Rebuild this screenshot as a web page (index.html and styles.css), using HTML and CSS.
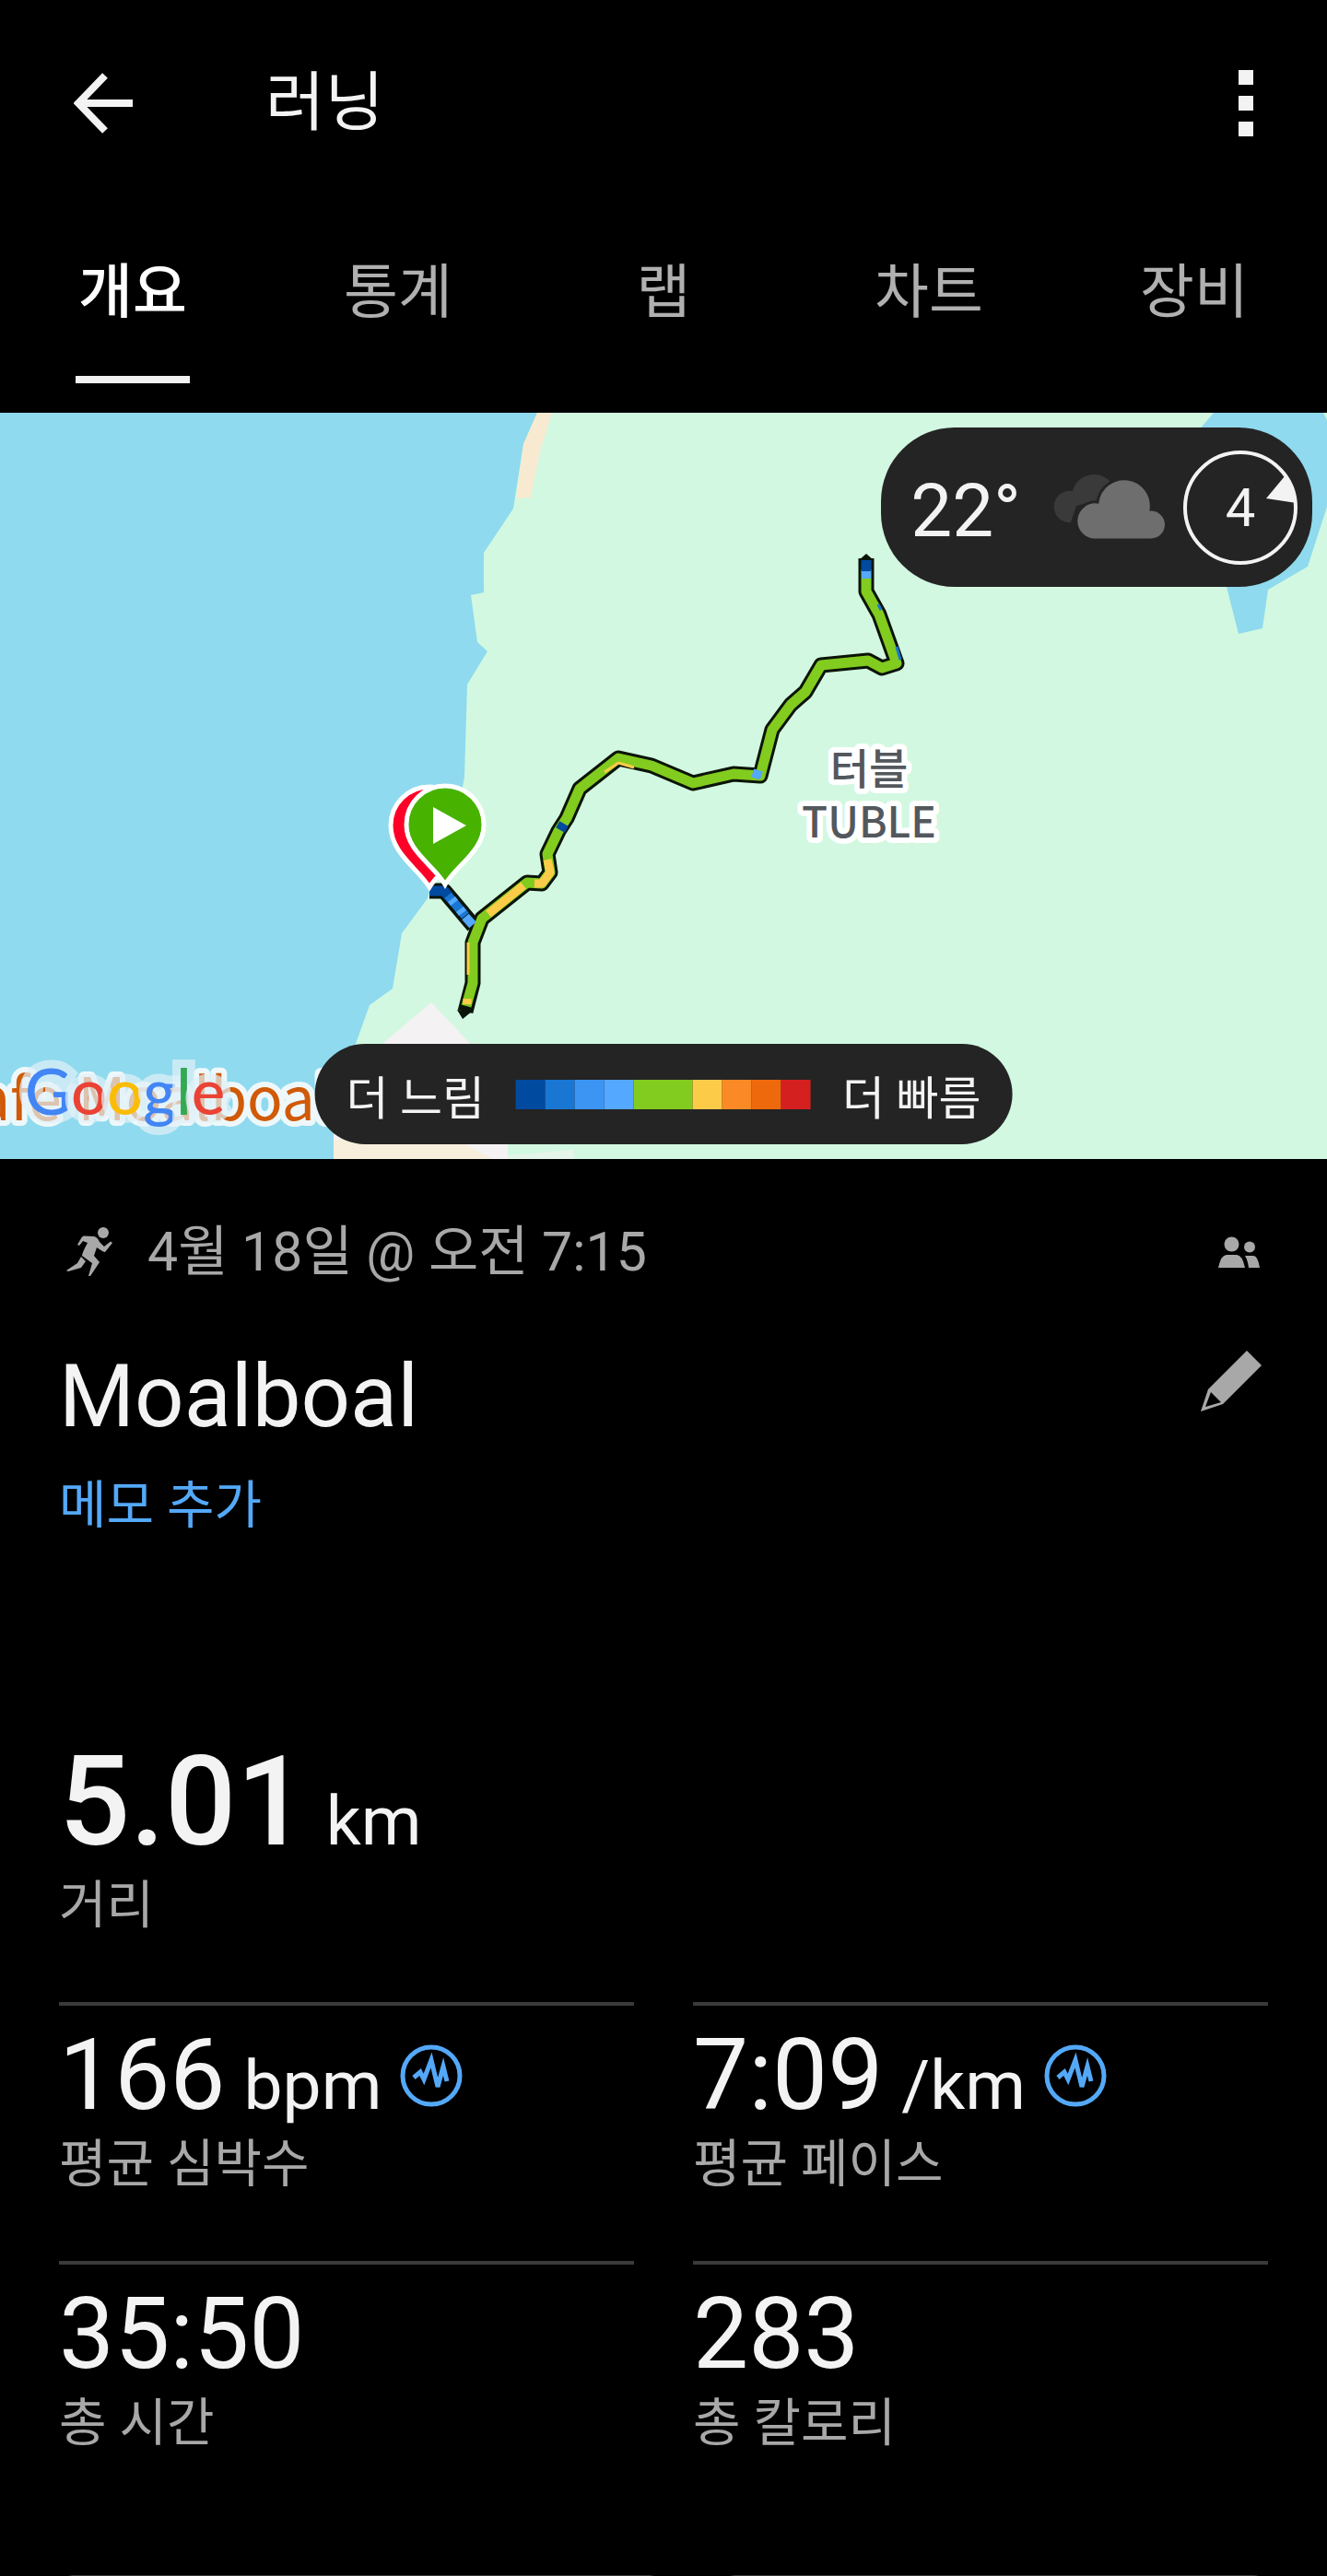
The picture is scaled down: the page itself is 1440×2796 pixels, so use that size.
FILE: index.html
```
<!DOCTYPE html>
<html lang="ko">
<head>
  <meta charset="UTF-8" />
  <meta name="viewport" content="width=device-width, initial-scale=1" />
  <title>러닝 - Moalboal</title>
  <link rel="stylesheet" href="styles.css">
</head>
<body>
  <header class="app-bar">
    <button class="icon-btn" aria-label="뒤로">
      <svg width="64" height="66" viewBox="0 0 64 66"><path d="M64 33H5M34 3L5 33l29 30" fill="none" stroke="currentColor" stroke-width="8"/></svg>
    </button>
    <h1>러닝</h1>
    <button class="icon-btn" aria-label="더보기">
      <svg width="16" height="72" viewBox="0 0 16 72" fill="currentColor"><path d="M0 0h16v16H0zM0 28h16v16H0zM0 56h16v16H0z"/></svg>
    </button>
  </header>

  <nav class="tabs">
    <button class="tab active">개요</button>
    <button class="tab">통계</button>
    <button class="tab">랩</button>
    <button class="tab">차트</button>
    <button class="tab">장비</button>
  </nav>

  <section class="map">
    <svg class="map-canvas" viewBox="0 0 1440 810" role="img" aria-label="지도">
      <rect width="1440" height="810" fill="#d2f8e1"/>
      <!-- sea -->
      <path fill="#8fdaee" d="M0 0H583L568 34 557 104 525 152V195L511 198 518 249 529 259 507 295 504 395 501 412 464 527 436 565 426 625 401 643 386 685 362 785V810H0z"/>
      <path fill="#f8ead0" d="M583 0H599L587 38 580 70 576 92 560 93 568 34z"/>
      <path fill="#8fdaee" d="M1317 0H1436L1440 8V102L1419 167 1376 192 1370 234 1344 240 1331 189 1300 20z"/>
      <!-- town -->
      <path fill="#f5f2f3" d="M468 640L520 695 551 794V810H362V730z"/>
      <path fill="#f7eedb" d="M362 790L420 784 498 790 534 810H362z"/>
      <path fill="#e5f5ea" d="M551 806L622 800V810H551z"/>

      <text class="place place-food" x="360" y="768" text-anchor="end">afe Moalboal</text>
      <text class="google" x="27" y="762"><tspan fill="#4285f4">G</tspan><tspan fill="#ea4335">o</tspan><tspan fill="#fbbc05">o</tspan><tspan fill="#4285f4">g</tspan><tspan fill="#34a853">l</tspan><tspan fill="#ea4335">e</tspan></text>
      <text class="place" x="943" y="403" text-anchor="middle">터블</text>
      <text class="place" x="943" y="461" text-anchor="middle">TUBLE</text>

      <!-- route -->
      <g fill="none" stroke-linejoin="round">
        <path class="route-edge" d="M466 519L482 519 514 557"/>
        <path class="route-edge" d="M940 158V194L954 219 973 272 957 277 942 269 891 274 874 303 858 317 838 344 825 394 796 392 752 402 707 383 671 375 629 408 615 440 606 454 594 479 597 499 588 511 572 510 523 549 513 575V619L505 650"/>
        <path fill="#0b1408" d="M932 160L940 153 948 160zM496 648L502 658 512 650z"/>
        <path stroke="#82cb1f" stroke-width="11" d="M940 170V194L954 219 973 272 957 277 942 269 891 274 874 303 858 317 838 344 825 394 796 392 752 402 707 383 671 375 629 408 615 440 606 454 594 479 597 499 588 511 572 510 523 549 513 575V619L506 644"/>
        <path stroke="#fccc49" stroke-width="9" d="M594 485L597 499 588 511H580M568 513L530 544"/>
        <path stroke="#fccc49" stroke-width="3" d="M508 575V610M671 380L656 390M671 380L688 385"/>
        <path stroke="#fccc49" stroke-width="9" d="M507 636V642"/>
        <path stroke="#004a9f" stroke-width="11" d="M466 519L482 519 487 525M612 446L608 453M940 160V172"/>
        <path stroke="#1976d2" stroke-width="10" d="M486 524L505 546"/>
        <path stroke="#54a8ff" stroke-width="10" d="M490 528L493 532M499 539L502 543M505 547L513 556M940 172V180M823 388L820 397"/>
        <path stroke="#1976d2" stroke-width="3" d="M953 208L956 214M973 254L977 268"/>
      </g>

      <!-- finish and start pins -->
      <path fill="#fc0028" stroke="#fff" stroke-width="5" d="M466 515C454 495 424 478 424 448a42 42 0 0 1 84 0C508 478 478 495 466 515z"/>
      <path fill="#47b200" stroke="#fff" stroke-width="5" d="M483 512C470 490 441 476 441 447a42 42 0 0 1 84 0C525 476 496 490 483 512z"/>
      <path fill="#fff" d="M470 428V468L506 448z"/>
    </svg>

    <div class="weather">
      <span>22°</span>
      <svg width="126" height="72" viewBox="0 0 126 72">
        <path fill="#3a3a3a" d="M18 52A17 17 0 0 1 24 18A24 24 0 0 1 68 12L52 28 28 34 22 52z"/>
        <path fill="#6e6e6e" stroke="#242424" stroke-width="3" d="M46 71A20.500 20.500 0 0 1 51 30A29 29 0 0 1 109 38A16.500 16.500 0 0 1 109 71z"/>
      </svg>
      <div class="wind">
        <svg width="124" height="124" viewBox="0 0 124 124">
          <circle cx="62" cy="62" r="60" fill="none" stroke="#f3f3f3" stroke-width="4"/>
          <path fill="#f3f3f3" d="M110 28L90 52 123 57Q120 40 110 28z"/>
        </svg>
        <span>4</span>
      </div>
    </div>

    <div class="legend">
      <span>더 느림</span>
      <div class="scale">
        <i class="s1"></i><i class="s2"></i><i class="s3"></i><i class="s4"></i><i class="s5"></i><i class="s6"></i><i class="s7"></i><i class="s8"></i><i class="s9"></i>
      </div>
      <span>더 빠름</span>
    </div>
  </section>

  <main class="overview">
    <div class="meta">
      <svg width="52" height="54" viewBox="0 0 52 54" fill="#a8a8a8">
        <circle cx="40" cy="6" r="6"/>
        <path d="M19 9.500L30 10Q34 11 36 16L41 21 48 15.500 50 17 42 27Q40 27 33 22L30 31 36 38 26 53H24L28 39 17 31Q17 28 23 17L18 15 14 20 12 19 17 10.500z"/>
        <path d="M16 32L21 37 16 44 2 48 0 47 12 39z"/>
      </svg>
      <time>4월 18일 @ 오전 7:15</time>
      <svg width="46" height="34" viewBox="0 0 46 34" fill="#a8a8a8">
        <circle cx="14.500" cy="8.500" r="8"/>
        <circle cx="34" cy="11.500" r="6"/>
        <path d="M0 34Q3 20 9 20H20Q26 20 29 34zM29 21H38Q43 21 45 34H33Q32 26 29 21z"/>
      </svg>
    </div>

    <div class="title">
      <h2>Moalboal</h2>
      <button class="icon-btn" aria-label="이름 편집">
        <svg width="66" height="66" viewBox="0 0 66 66" fill="#a8a8a8" fill-rule="evenodd"><path d="M50 0L66 16 24 58 0 66 8 42zM11 45L5 61 22 56z"/></svg>
      </button>
    </div>
    <a class="memo" href="#">메모 추가</a>

    <div class="distance">
      <p class="value big">5.01 <small>km</small></p>
      <p class="label">거리</p>
    </div>

    <div class="stats">
      <div class="stat">
        <p class="value">166 <small>bpm</small>
          <svg class="pulse" width="68" height="68" viewBox="0 0 68 68"><circle cx="34" cy="34" r="31"/><path d="M15 36L22 30 26 38 34 17 41 46 47 24 51 40"/></svg>
        </p>
        <p class="label">평균 심박수</p>
      </div>
      <div class="stat">
        <p class="value">7:09 <small>/km</small>
          <svg class="pulse" width="68" height="68" viewBox="0 0 68 68"><circle cx="34" cy="34" r="31"/><path d="M15 36L22 30 26 38 34 17 41 46 47 24 51 40"/></svg>
        </p>
        <p class="label">평균 페이스</p>
      </div>
      <div class="stat">
        <p class="value">35:50</p>
        <p class="label">총 시간</p>
      </div>
      <div class="stat">
        <p class="value">283</p>
        <p class="label">총 칼로리</p>
      </div>
    </div>
  </main>

  <section class="cards">
    <div class="card"></div>
    <div class="card"></div>
  </section>
</body>
</html>
```

FILE: styles.css
```
* { box-sizing: border-box; }

body {
  margin: 0;
  height: 100vh;
  display: flex;
  flex-direction: column;
  overflow: hidden;
  background: #000;
  color: #f3f3f3;
  font-family: Roboto, "Noto Sans CJK KR", sans-serif;
}

h1, h2, p { margin: 0; font-weight: 400; }
svg { display: block; flex: none; }

button {
  background: none;
  border: none;
  padding: 0;
  color: inherit;
  font: inherit;
  cursor: pointer;
}

.app-bar {
  display: flex;
  align-items: center;
  flex: none;
  height: 224px;
  padding: 0 80px;
}

.app-bar h1 {
  flex: 1;
  margin-left: 144px;
  font-size: 70px;
  line-height: 80px;
}

.tabs {
  display: flex;
  flex: none;
  padding-bottom: 32px;
}

.tab {
  width: 124px;
  margin: 0 auto;
  padding: 62px 0 58px;
  border-bottom: 8px solid transparent;
  color: #b0b0b0;
  font-size: 64px;
  line-height: 64px;
  white-space: nowrap;
}

.tab.active {
  color: #fff;
  font-weight: 500;
  border-color: #f3f3f3;
}

.map {
  position: relative;
  flex: none;
}

.map-canvas { width: 100%; }

.place {
  fill: #53585d;
  stroke: #fff;
  stroke-width: 12px;
  stroke-linejoin: round;
  paint-order: stroke;
  font-family: "Noto Sans CJK KR", sans-serif;
  font-size: 46px;
  font-weight: 500;
}

.place-food {
  fill: #d05a08;
  stroke: #eef8fa;
  font-size: 64px;
  font-weight: 400;
}

.google {
  stroke: rgba(225, 241, 248, 0.7);
  stroke-width: 18px;
  paint-order: stroke;
  font-family: Lato, sans-serif;
  font-size: 69px;
  font-weight: 500;
}

.route-edge {
  stroke: #0b1408;
  stroke-width: 17px;
}

.weather {
  position: absolute;
  top: 16px;
  right: 16px;
  display: flex;
  align-items: center;
  height: 173px;
  padding: 0 16px 0 32px;
  border-radius: 80px;
  background: #242424;
  font-size: 80px;
  gap: 18px;
}

.weather > span {
  margin-right: 14px;
  padding-top: 8px;
}

.wind { display: grid; place-items: center; }
.wind > * { grid-area: 1 / 1; }
.wind span { font-size: 58px; }

.legend {
  position: absolute;
  bottom: 16px;
  left: 50%;
  transform: translateX(-50%);
  display: flex;
  align-items: center;
  gap: 34px;
  height: 109px;
  padding: 0 34px;
  border-radius: 55px;
  background: #242424;
  font-size: 50px;
  white-space: nowrap;
}

.scale { display: flex; }
.scale i { width: 32px; height: 32px; }

.s1 { background: #004a9f; }
.s2 { background: #1976d2; }
.s3 { background: #3d95f3; }
.s4 { background: #54a8ff; }
.scale .s5 { width: 64px; background: #82cb1f; }
.s6 { background: #fccc49; }
.s7 { background: #fb8a26; }
.s8 { background: #ee690c; }
.s9 { background: #d4201f; }

.overview { flex: none; padding: 0 64px; }

.meta {
  display: flex;
  align-items: center;
  height: 202px;
  padding: 0 8px;
  color: #a8a8a8;
  font-size: 59px;
}

.meta time {
  flex: 1;
  margin-left: 36px;
  line-height: 64px;
}

.title {
  display: flex;
  justify-content: space-between;
  align-items: flex-start;
  padding-right: 7px;
}

.title h2 { font-size: 94px; line-height: 112px; }
.title .icon-btn { padding-top: 6px; }

.memo {
  display: block;
  margin-top: 30px;
  color: #54a8f8;
  font-size: 56px;
  line-height: 64px;
  text-decoration: none;
}

.distance { margin: 210px 0 73px; }

.value {
  display: flex;
  align-items: baseline;
  gap: 20px;
  font-size: 107px;
  line-height: 120px;
}

.value small {
  font-size: 75px;
  line-height: 1;
}

.value.big {
  font-size: 136px;
  line-height: 160px;
  font-weight: 500;
}

.big small { font-weight: 400; }

.label {
  color: #a8a8a8;
  font-size: 56px;
  line-height: 64px;
}

.stats {
  display: grid;
  grid-template-columns: 1fr 1fr;
  gap: 73px 64px;
}

.stat {
  border-top: 4px solid #3a3a3a;
  padding-top: 16px;
}

.stat .label { margin-top: 4px; }

.pulse {
  align-self: center;
  fill: none;
  stroke: #54a8f8;
  stroke-width: 5;
}

.cards {
  display: grid;
  grid-template-columns: 657fr 594fr;
  gap: 62px;
  flex: 1;
  min-height: 0;
  overflow: hidden;
  padding: 0 64px;
  margin-top: 133px;
}

.card {
  height: 240px;
  border: 2px solid #3a3a3a;
  border-radius: 16px;
}
```
